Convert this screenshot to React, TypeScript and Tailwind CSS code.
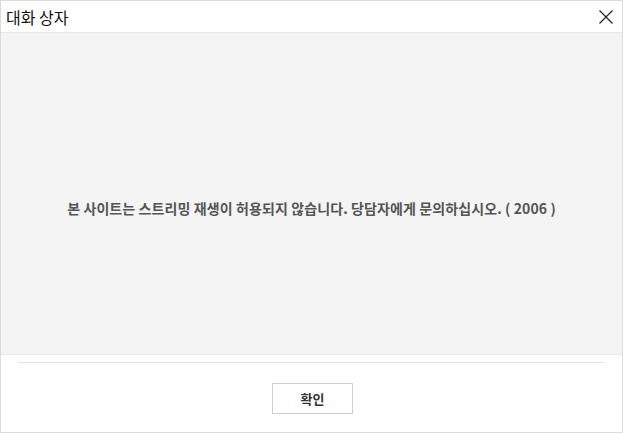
export default function App() {
  return (
    <div
      className="w-[623px] h-[433px] flex flex-col bg-white border border-[#dcdcdc] overflow-hidden"
      style={{ fontFamily: '"Noto Sans CJK KR", "Noto Sans", sans-serif' }}
    >
      {/* Title bar */}
      <div className="h-[31px] shrink-0 flex items-center justify-between pl-[5px] pr-[4px] bg-white">
        <span className="text-[16px] text-[#111] leading-none">대화 상자</span>
        <button className="w-[24px] h-[24px] flex items-center justify-center" aria-label="닫기">
          <svg width="16" height="16" viewBox="0 0 16 16" fill="none" stroke="#222" strokeWidth="1.2">
            <path d="M1.5 1.5 L14.5 14.5 M14.5 1.5 L1.5 14.5" />
          </svg>
        </button>
      </div>

      {/* Content */}
      <div className="h-[323px] shrink-0 bg-[#f4f4f4] border-y border-[#e9e9e9] flex items-center justify-center">
        <p className="text-[14px] font-bold text-[#555] tracking-[0.1px] mt-[30px]">
          본 사이트는 스트리밍 재생이 허용되지 않습니다. 당담자에게 문의하십시오. ( 2006 )
        </p>
      </div>

      {/* Footer */}
      <div className="flex-1 flex flex-col px-[17px]">
        <div className="mt-[7px] h-[1px] bg-[#e2e2e2]" />
        <div className="flex-1 flex items-start justify-center pt-[20px] pl-[2px]">
          <button className="w-[81px] h-[31px] border border-[#cfcfcf] bg-white text-[13px] font-semibold text-[#333]">
            확인
          </button>
        </div>
      </div>
    </div>
  );
}
